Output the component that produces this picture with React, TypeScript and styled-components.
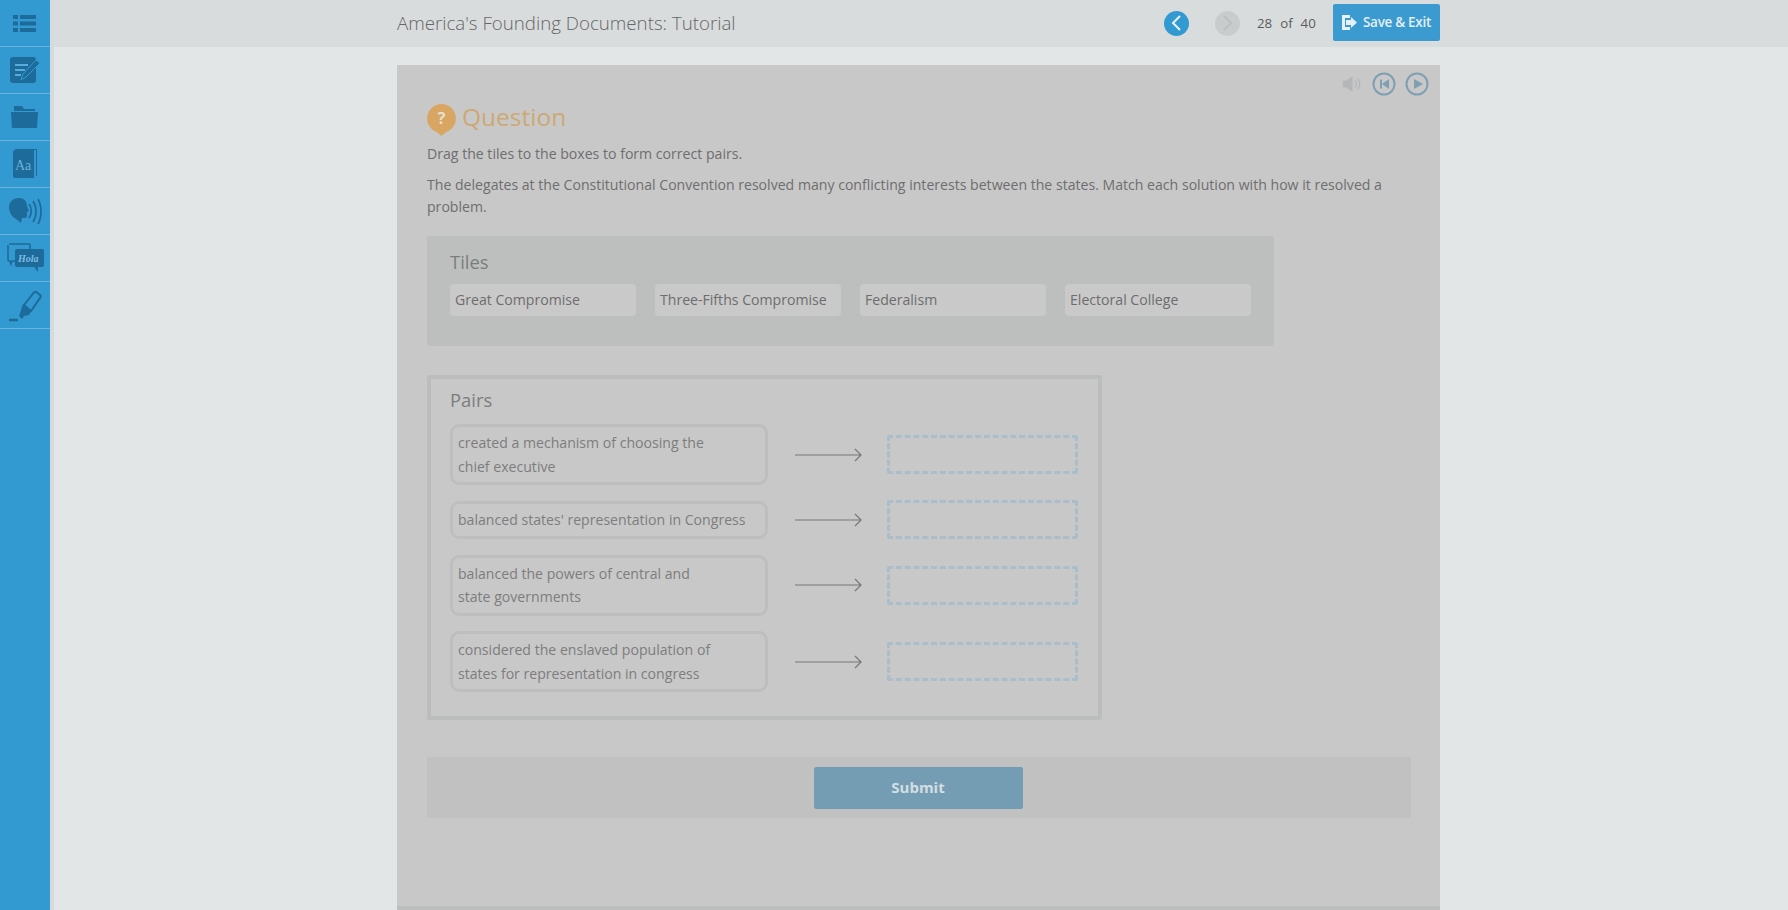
import React from "react";
import styled, { createGlobalStyle } from "styled-components";

const Global = createGlobalStyle`
  html, body { margin: 0; padding: 0; height: 100%; overflow: hidden; background: #e2e6e7; }
  body { font-family: "Open Sans", "Liberation Sans", sans-serif; color: #6f6f6f; }
`;
const Page = styled.div`display: flex; width: 1788px; height: 910px; overflow: hidden;`;
const Sidebar = styled.nav`width: 50px; flex: none; background: #3399d1; border-right: 4px solid #d5dadc; display: flex; flex-direction: column;`;
const SideItem = styled.div`height: 46px; border-bottom: 1px solid #6cb3dc; display: flex; align-items: center; justify-content: center; color: #1d6b9b; box-sizing: content-box;`;
const Main = styled.div`flex: 1; min-width: 0; display: flex; flex-direction: column;`;
const Header = styled.header`height: 47px; flex: none; background: #d9dcdd; padding-left: 343px; display: flex; align-items: center; box-sizing: border-box; width: 100%;`;
const HeaderInner = styled.div`width: 1043px; display: flex; align-items: center; margin-top: -1px;`;
const Title = styled.h1`margin: -2px 0 0; font-size: 18.7px; font-weight: 300; color: #666; flex: 1;`;
const Round = styled.div<{ $on?: boolean }>`width: 25px; height: 25px; border-radius: 50%; background: ${p => p.$on ? "#3399d1" : "#c9cccd"}; color: ${p => p.$on ? "#e8f3f9" : "#bdc0c1"}; display: flex; align-items: center; justify-content: center; margin-right: ${p => p.$on ? 26 : 15}px;`;
const Count = styled.div`font-size: 13.3px; color: #5c5c5c; width: 60px; margin-left: 2px; margin-right: 16px; word-spacing: 4.5px; white-space: nowrap;`;
const Save = styled.div`width: 107px; height: 37px; margin-top: -2px; background: #3b9bd1; border-radius: 2px; color: #e4eff6; font-size: 13.5px; font-weight: 600; letter-spacing: -0.3px; display: flex; align-items: center; justify-content: center; gap: 6px;`;
const Body = styled.div`padding: 18px 0 0 343px; flex: 1;`;
const Panel = styled.section`width: 1043px; height: 845px; box-sizing: border-box; background: #c8c8c8; border-bottom: 4px solid #bcbebd; padding: 0 30px; position: relative;`;
const Media = styled.div`position: absolute; top: 7px; right: 11px; display: flex; align-items: center; gap: 9px; color: #7f9fb3;`;
const QuestionHead = styled.div`display: flex; align-items: center; gap: 6px; padding-top: 37px; height: 32px;`;
const BubbleWrap = styled.div`margin-top: 3px; line-height: 0;`;
const QuestionTitle = styled.h2`margin: -2px 0 0; font-size: 24.5px; font-weight: 400; color: #cda874; line-height: 32px;`;
const Para = styled.p<{ $top: number }>`margin: ${p => p.$top}px 0 0; font-size: 14.1px; line-height: 22px; color: #6e6e6e;`;
const TilesBox = styled.div`margin-top: 18px; width: 847px; height: 110px; box-sizing: border-box; background: #bdbfbe; border-radius: 3px; padding: 13px 23px;`;
const SectionLabel = styled.div`font-size: 18.4px; color: #7b7d7d; line-height: 25px;`;
const TileRow = styled.div`display: flex; gap: 19px; margin-top: 10px;`;
const Tile = styled.div`width: 186px; height: 32px; box-sizing: border-box; background: #c9c9c9; border-radius: 4px; padding-left: 5px; font-size: 14.1px; line-height: 31px; color: #6d6d6d; white-space: nowrap;`;
const PairsBox = styled.div`margin-top: 29px; width: 675px; height: 345px; box-sizing: border-box; border: 4px solid #bbbdbc; border-radius: 2px; padding: 8px 19px;`;
const PairList = styled.div`display: flex; flex-direction: column; gap: 15.4px; margin-top: 12px;`;
const Pair = styled.div`display: flex; align-items: center;`;
const Prompt = styled.div`width: 318px; box-sizing: border-box; border: 3px solid #bdbfbe; border-radius: 9px; padding: 4px 5px; font-size: 14.1px; line-height: 23.5px; color: #7d7d7d; white-space: pre-line;`;
const ArrowWrap = styled.div`width: 119px; box-sizing: border-box; padding-left: 1px; display: flex; justify-content: center; color: #777;`;
const Drop = styled.div`width: 191px; height: 39px; box-sizing: border-box; border: 3px dashed #a9bdca; border-radius: 3px;`;
const SubmitBar = styled.div`margin-top: 37px; width: 984px; height: 61px; background: #c1c1c1; display: flex; align-items: center; justify-content: center;`;
const Submit = styled.div`width: 209px; height: 42px; margin-right: 2px; background: #749db3; border-radius: 2px; color: #d3dde2; font-size: 15px; font-weight: 700; padding-bottom: 2px; box-sizing: border-box; display: flex; align-items: center; justify-content: center;`;
const NudgeIcon = styled.span<{ $x?: number; $y?: number }>`display: flex; margin: ${p => p.$y ?? 0}px 0 0 ${p => p.$x ?? 0}px;`;

const ListIcon = () => <svg width="23" height="17" viewBox="0 0 23 17" fill="currentColor"><rect x="0" y="0" width="5" height="4"/><rect x="7" y="0" width="16" height="4"/><rect x="0" y="6.500" width="5" height="4"/><rect x="7" y="6.500" width="16" height="4"/><rect x="0" y="13" width="5" height="4"/><rect x="7" y="13" width="16" height="4"/></svg>;
const NoteIcon = () => <svg width="30" height="27" viewBox="0 0 30 27"><rect x="0" y="0" width="26" height="26" rx="3" fill="currentColor"/><path d="M5 8h13M5 13h10M5 18h6" stroke="#5aacdb" strokeWidth="2"/><path d="M11 23l2-6L26 3l4 3-14 14z" fill="currentColor" stroke="#3399d1" strokeWidth="1"/></svg>;
const FolderIcon = () => <svg width="27" height="22" viewBox="0 0 27 22" fill="currentColor"><path d="M3 0h8l2 3h11v2H3z"/><path d="M0 6h27l-1 16H1z"/></svg>;
const BookIcon = () => <svg width="26" height="30" viewBox="0 0 26 30"><path d="M3 0h22v27h-1V1H4z" fill="currentColor"/><path d="M3 1h19v28H3a2 2 0 0 1-2-2V3a2 2 0 0 1 2-2z" fill="currentColor"/><text x="3" y="21" fontFamily="Liberation Serif, serif" fontSize="14" fill="#6bb1d8">Aa</text></svg>;
const SpeakIcon = () => <svg width="33" height="27" viewBox="0 0 33 27" fill="none"><path d="M10 0c5 0 8 3 8 8l2 5-2 1v4c0 2-2 2-5 2l-1 5-5-4C3 19 0 14 0 9c0-5 4-9 10-9z" fill="currentColor"/><path d="M20 6c3 4 3 10 0 14M24 3c4 6 4 15 0 21M29 1c4 7 4 18 0 25" stroke="currentColor" strokeWidth="1.700"/></svg>;
const HolaIcon = () => <svg width="37" height="30" viewBox="0 0 37 30" fill="none"><path d="M2 1h20a1 1 0 0 1 1 1v5M8 18H5l-1 3-1-3a2 2 0 0 1-2-1V2" stroke="currentColor" strokeWidth="1.600"/><path d="M10 6h25a2 2 0 0 1 2 2v14a2 2 0 0 1-2 2h-4v5l-4-5H10a2 2 0 0 1-2-2V8a2 2 0 0 1 2-2z" fill="currentColor"/><text x="11" y="19" fontFamily="Liberation Serif, serif" fontStyle="italic" fontWeight="700" fontSize="10" fill="#7cbce0">Hola</text></svg>;
const MarkerIcon = () => <svg width="33" height="31" viewBox="0 0 33 31"><path d="M25 1.500c1-1 2-1 3 0l3 2.500c1 1 1 2 0 3L22 20l-7-6z" fill="none" stroke="currentColor" strokeWidth="2"/><path d="M14 13l8 7-2 4-5 1-2 3-3-3 1-3z" fill="currentColor"/><path d="M0 29h9" stroke="currentColor" strokeWidth="2.500"/></svg>;
const Left = () => <svg width="11" height="16" viewBox="0 0 11 16" fill="none" stroke="currentColor" strokeWidth="2"><path d="M9 1L2 8l7 7"/></svg>;
const Right = () => <svg width="11" height="16" viewBox="0 0 11 16" fill="none" stroke="currentColor" strokeWidth="2"><path d="M2 1l7 7-7 7"/></svg>;
const Exit = () => <svg width="15" height="15" viewBox="0 0 15 15" fill="currentColor"><path d="M0 0h8v3H3v9h5v3H0z"/><path d="M4 5h5V2l6 5.500-6 5.500V10H4z"/></svg>;
const Speaker = () => <svg width="21" height="16" viewBox="0 0 24 18" fill="none" style={{ opacity: 0.55 }}><path d="M1 5h4l7-5v18l-7-5H1z" fill="#a3aaae"/><path d="M15 5c2 2 2 6 0 8M18 3c3 3 3 9 0 12" stroke="#a3aaae" strokeWidth="1.400"/></svg>;
const Back = () => <svg width="24" height="24" viewBox="0 0 24 24" fill="none"><circle cx="12" cy="12" r="10.500" stroke="currentColor" strokeWidth="2"/><path d="M8 7.500h2v9H8zM17 7v10l-7-5z" fill="currentColor"/></svg>;
const Play = () => <svg width="24" height="24" viewBox="0 0 24 24" fill="none"><circle cx="12" cy="12" r="10.500" stroke="currentColor" strokeWidth="2"/><path d="M9 7l9 5-9 5z" fill="currentColor"/></svg>;
const Bubble = () => <svg width="29" height="32" viewBox="0 0 29 32"><path d="M14.500 0a14.500 14.500 0 0 1 4 28.400L14.500 32l-4-3.600A14.500 14.500 0 0 1 14.500 0z" fill="#d8a662"/><text x="14.500" y="20" textAnchor="middle" fontFamily="Open Sans, sans-serif" fontWeight="700" fontSize="16" fill="#e6e0d4">?</text></svg>;
const Arrow = () => <svg width="67" height="14" viewBox="0 0 67 14" fill="none" stroke="currentColor" strokeWidth="1.200"><path d="M0 7h65M60 1l6 6-6 6"/></svg>;

const side = [
  <NudgeIcon $x={-2}><ListIcon /></NudgeIcon>,
  <NoteIcon />,
  <NudgeIcon $x={-1}><FolderIcon /></NudgeIcon>,
  <BookIcon />,
  <SpeakIcon />,
  <HolaIcon />,
  <NudgeIcon $y={2}><MarkerIcon /></NudgeIcon>,
];
const tiles = ["Great Compromise", "Three-Fifths Compromise", "Federalism", "Electoral College"];
const pairs = [
  "created a mechanism of choosing the\nchief executive",
  "balanced states' representation in Congress",
  "balanced the powers of central and\nstate governments",
  "considered the enslaved population of\nstates for representation in congress",
];

export default function App() {
  return (
    <Page>
      <Global />
      <Sidebar>{side.map((s, i) => <SideItem key={i}>{s}</SideItem>)}</Sidebar>
      <Main>
        <Header>
          <HeaderInner>
            <Title>America's Founding Documents: Tutorial</Title>
            <Round $on><Left /></Round>
            <Round><Right /></Round>
            <Count>28 of 40</Count>
            <Save><Exit />Save &amp; Exit</Save>
          </HeaderInner>
        </Header>
        <Body>
          <Panel>
            <Media><Speaker /><Back /><Play /></Media>
            <QuestionHead><BubbleWrap><Bubble /></BubbleWrap><QuestionTitle>Question</QuestionTitle></QuestionHead>
            <Para $top={9}>Drag the tiles to the boxes to form correct pairs.</Para>
            <Para $top={9}>The delegates at the Constitutional Convention resolved many conflicting interests between the states. Match each solution with how it resolved a problem.</Para>
            <TilesBox>
              <SectionLabel>Tiles</SectionLabel>
              <TileRow>{tiles.map(t => <Tile key={t}>{t}</Tile>)}</TileRow>
            </TilesBox>
            <PairsBox>
              <SectionLabel>Pairs</SectionLabel>
              <PairList>
                {pairs.map(p => (
                  <Pair key={p}>
                    <Prompt>{p}</Prompt>
                    <ArrowWrap><Arrow /></ArrowWrap>
                    <Drop />
                  </Pair>
                ))}
              </PairList>
            </PairsBox>
            <SubmitBar><Submit>Submit</Submit></SubmitBar>
          </Panel>
        </Body>
      </Main>
    </Page>
  );
}
